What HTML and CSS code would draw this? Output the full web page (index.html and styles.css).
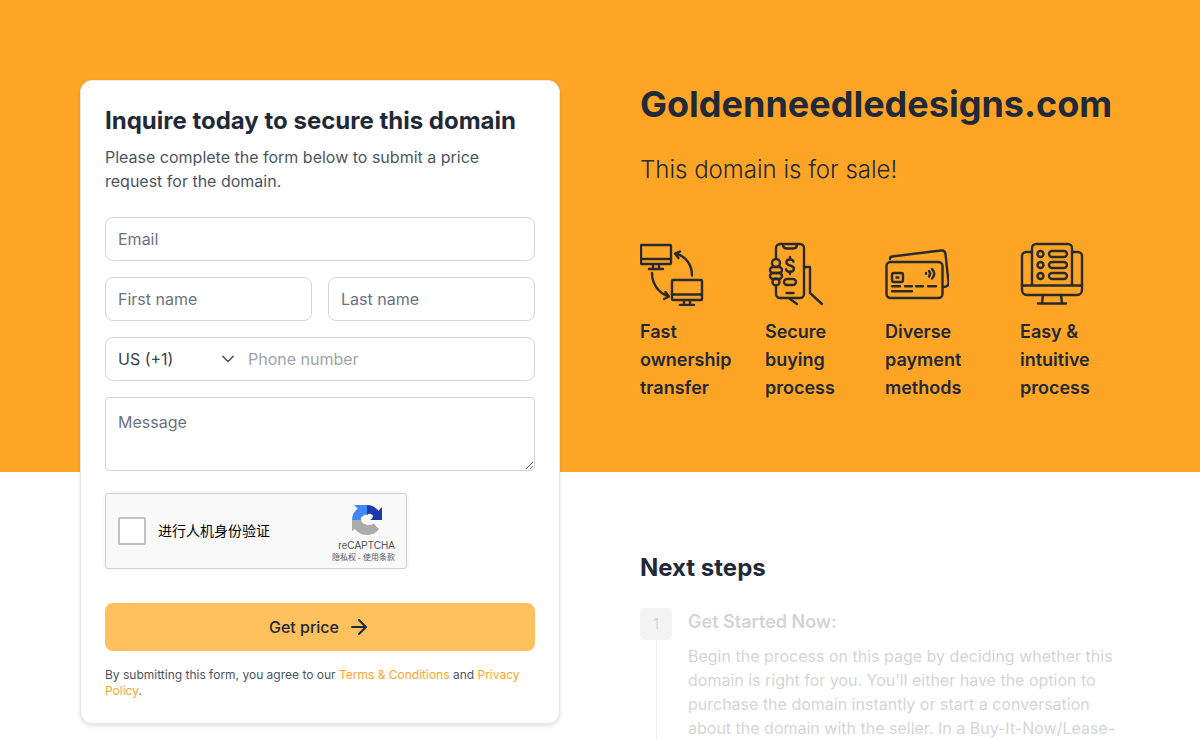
FILE: index.html
```html
<!DOCTYPE html>
<html lang="en">
<head>
    <meta charset="UTF-8">
    <meta name="viewport" content="width=device-width, initial-scale=1.0">
    <title>Goldenneedledesigns.com is for sale</title>
    <link rel="stylesheet" href="styles.css">
</head>
<body>
    <main class="page">
        <div class="hero-bg"></div>

        <form class="card">
            <h2 class="card-title">Inquire today to secure this domain</h2>
            <p class="card-text">Please complete the form below to submit a price request for the domain.</p>

            <div class="fields">
                <input type="email" class="field" placeholder="Email" aria-label="Email">
                <div class="name-row">
                    <input type="text" class="field" placeholder="First name" aria-label="First name">
                    <input type="text" class="field" placeholder="Last name" aria-label="Last name">
                </div>
                <div class="phone-row">
                    <div class="country">
                        <select class="country-select" aria-label="Country code">
                            <option>US (+1)</option>
                        </select>
                        <svg class="chevron" viewBox="0 0 12 8" fill="none" stroke="#4b5563" stroke-width="1.7" stroke-linecap="round" stroke-linejoin="round">
                            <path d="M1 1.500l5 5 5-5"/>
                        </svg>
                    </div>
                    <input type="tel" class="phone-input" placeholder="Phone number" aria-label="Phone number">
                </div>
                <textarea class="field message" placeholder="Message" aria-label="Message"></textarea>
            </div>

            <div class="captcha">
                <input type="checkbox" id="human" class="captcha-box">
                <label for="human" class="captcha-label">进行人机身份验证</label>
                <div class="captcha-brand">
                    <svg class="captcha-logo" viewBox="0 0 64 64">
                        <path fill="#1c3aa9" d="M64 32V4.500L56.400 12.100C50.200 4.500 41.600 0 32 0v22c3-4 8-4 10-1 4 0 4 5 1 7l-4 4z"/>
                        <path fill="#4285f4" d="M32 0H4.500l7.600 7.600C4.500 13.800 0 22.400 0 32h20c-3-4 0-8 4-8 1-3 5-4 8-2z"/>
                        <path fill="#ababab" d="M0 32v24l6-5C13 59.500 22.400 64 32 64c10.500 0 19.800-5 25.600-12.900L45 39c-2 3-5 4-8 3-3 2-7 1-8-2-4 1-8-1-9-8z"/>
                    </svg>
                    <span class="captcha-name">reCAPTCHA</span>
                    <span class="captcha-links"><a href="#">隐私权</a> - <a href="#">使用条款</a></span>
                </div>
            </div>

            <button type="submit" class="submit-btn">
                Get price
                <svg class="arrow" viewBox="0 0 16 16" fill="none" stroke="#1f2937" stroke-width="2" stroke-linecap="round" stroke-linejoin="round">
                    <path d="M1 8h14M8 1l7 7-7 7"/>
                </svg>
            </button>

            <p class="terms">By submitting this form, you agree to our <a href="#">Terms &amp; Conditions</a> and <a href="#">Privacy Policy</a>.</p>
        </form>

        <section class="hero">
            <h1 class="domain">Goldenneedledesigns.com</h1>
            <p class="tagline">This domain is for sale!</p>

            <ul class="features">
                <li>
                    <!-- two computers -->
                    <svg class="feature-icon" viewBox="0 0 64 64">
                        <rect x="1" y="3" width="30" height="19" rx="1"/>
                        <path d="M1 17h30M13 22.500v4M19 22.500v4M9 27h14"/>
                        <rect x="32" y="38" width="30" height="20" rx="1"/>
                        <path d="M32 52.500h30M44 58.500v4M50 58.500v4M40 63h14"/>
                        <path d="M52 33.500C52 23 46 14 35.500 11.500M40 9.500l-5 2 3.500 4.500"/>
                        <path d="M12 31c0 10 6 20 16 23M24 57l5-2.500-3.500-4.500"/>
                    </svg>
                    <span>Fast ownership transfer</span>
                </li>
                <li>
                    <!-- hand with a phone -->
                    <svg class="feature-icon" viewBox="0 0 64 64">
                        <path d="M11 17V6a4 4 0 0 1 4-4h20a4 4 0 0 1 4 4v46a4 4 0 0 1-4 4H15a4 4 0 0 1-4-4v-8"/>
                        <path d="M18 2.500c0 3 1.500 4 4 4h6c2.500 0 4-1 4-4"/>
                        <circle cx="11" cy="21" r="4"/>
                        <rect x="5" y="25" width="12" height="6" rx="3"/>
                        <rect x="5" y="31" width="12" height="6" rx="3"/>
                        <circle cx="11" cy="40" r="3.500"/>
                        <path d="M28.500 19.500c-.5-1.500-2-2-3.500-2-2 0-3.500 1.200-3.500 3s1.500 2.500 3.500 3c2.200.5 4 1.300 4 3.300s-1.800 3-4 3c-1.800 0-3.500-.8-4-2.500M25 15v2.500M25 30v2"/>
                        <rect x="19" y="37" width="12" height="6" rx="3"/>
                        <path d="M21.500 51h7M39.500 26l1-1H45v26l12 11M25 57l7 5"/>
                    </svg>
                    <span>Secure buying process</span>
                </li>
                <li>
                    <!-- bank cards -->
                    <svg class="feature-icon" viewBox="0 0 64 64">
                        <rect x="1.500" y="20" width="56" height="36" rx="4"/>
                        <path d="M5 17v-.5a2 2 0 0 1 2-2L56 8.500c3-.3 4.200 1 4.500 3.500l3 28c.2 3-1 5-5.500 5"/>
                        <rect x="7" y="31" width="11" height="9" rx="2"/>
                        <path d="M11.500 35.500h2M7 44.300h8M20 44.300h7M31 44.300h7M43 44.300h8M7 49.300h20"/>
                        <path d="M41 31v.8M44 29c1.400 1.500 1.400 3.500 0 5.500M47 27c2.800 3 2.800 6.500 0 9.500" />
                    </svg>
                    <span>Diverse payment methods</span>
                </li>
                <li>
                    <!-- form on a monitor -->
                    <svg class="feature-icon" viewBox="0 0 64 64">
                        <path d="M11 10H6a4 4 0 0 0-4 4v34a5 5 0 0 0 5 5h50a5 5 0 0 0 5-5V14a4 4 0 0 0-4-4h-5"/>
                        <path d="M12 43V6a4 4 0 0 1 4-4h32a4 4 0 0 1 4 4v37M2 43.500h60M23 53l-1 8M41 53l1 8M18 61.500h28"/>
                        <circle cx="20.500" cy="12" r="3"/>
                        <circle cx="20.500" cy="23" r="3"/>
                        <circle cx="20.500" cy="34" r="3"/>
                        <rect x="29" y="9" width="18" height="6" rx="3"/>
                        <rect x="29" y="20" width="18" height="6" rx="3"/>
                        <rect x="29" y="31" width="18" height="6" rx="3"/>
                    </svg>
                    <span>Easy &amp; intuitive process</span>
                </li>
            </ul>
        </section>

        <section class="next">
            <h2 class="next-title">Next steps</h2>
            <div class="step">
                <div class="step-marker">
                    <span class="step-number">1</span>
                    <span class="step-line"></span>
                </div>
                <div>
                    <h3 class="step-title">Get Started Now:</h3>
                    <p class="step-text">Begin the process on this page by deciding whether this domain is right for you. You’ll either have the option to purchase the domain instantly or start a conversation about the domain with the seller. In a Buy-It-Now/Lease-</p>
                </div>
            </div>
        </section>
    </main>
</body>
</html>
```
FILE: styles.css
```css
* {
    margin: 0;
    padding: 0;
    box-sizing: border-box;
}

body {
    background: #ffffff;
    color: #1f2937;
    font-family: Inter, sans-serif;
    font-size: 16px;
    line-height: 24px;
}

input,
select,
textarea,
button {
    font: inherit;
    color: inherit;
}

.page {
    display: grid;
    grid-template-columns: 1fr 1fr;
    grid-template-rows: auto 1fr;
}

.hero-bg {
    grid-area: 1 / 1 / 2 / 3;
    background: #ffa526;
}

/* Inquiry form */
.card {
    grid-area: 1 / 1 / 3 / 2;
    align-self: start;
    margin: 80px 40px 16px 80px;
    padding: 24px;
    background: #ffffff;
    border: 1px solid #e5e7eb;
    border-radius: 12px;
    box-shadow: 0 2px 4px rgba(0, 0, 0, 0.12);
}

.card-title {
    font-size: 24px;
    line-height: 32px;
    font-weight: 700;
    margin-bottom: 8px;
}

.card-text {
    color: #4b5563;
    margin-bottom: 24px;
}

.fields {
    display: grid;
    gap: 16px;
}

.field {
    width: 100%;
    height: 44px;
    padding: 0 12px;
    border: 1px solid #d1d5db;
    border-radius: 8px;
    background: #ffffff;
}

.field::placeholder {
    color: #6b7280;
}

.name-row {
    display: grid;
    grid-template-columns: 1fr 1fr;
    gap: 16px;
}

.phone-row {
    display: flex;
    height: 44px;
    border: 1px solid #d1d5db;
    border-radius: 8px;
}

.country {
    display: flex;
    align-items: center;
    width: 128px;
    padding-left: 12px;
}

.country-select {
    flex: 1;
    min-width: 0;
    height: 100%;
    border: none;
    background: transparent;
    color: #374151;
    appearance: none;
}

.chevron {
    width: 12px;
    height: 8px;
}

.phone-input {
    flex: 1;
    min-width: 0;
    padding: 0 14px;
    border: none;
    background: transparent;
}

.phone-input::placeholder {
    color: #9ca3af;
}

.message {
    display: block;
    height: 74px;
    padding: 12px;
    border-radius: 4px;
    resize: vertical;
}

/* Captcha */
.captcha {
    display: flex;
    align-items: center;
    width: 302px;
    height: 76px;
    margin: 22px 0 34px;
    padding: 0 11px 0 12px;
    background: #f9f9f9;
    border: 1px solid #d3d3d3;
    border-radius: 3px;
    box-shadow: 0 0 4px rgba(0, 0, 0, 0.08);
    color: #000000;
    font-family: "Liberation Sans", "Noto Sans CJK SC", sans-serif;
}

.captcha-box {
    appearance: none;
    width: 28px;
    height: 28px;
    border: 2px solid #c1c1c1;
    border-radius: 2px;
    background: #ffffff;
}

.captcha-label {
    flex: 1;
    margin-left: 12px;
    font-size: 14px;
}

.captcha-brand {
    display: flex;
    flex-direction: column;
    align-items: flex-end;
    padding-top: 6px;
    color: #555555;
}

.captcha-logo {
    width: 30px;
    height: 30px;
    margin: 0 13px 4px 0;
}

.captcha-name {
    font-size: 10px;
    line-height: 13px;
}

.captcha-links {
    font-size: 8px;
    line-height: 12px;
}

.captcha-links a {
    color: inherit;
    text-decoration: none;
}

.submit-btn {
    display: flex;
    align-items: center;
    justify-content: center;
    gap: 12px;
    width: 100%;
    height: 48px;
    padding-right: 4px;
    border: none;
    border-radius: 8px;
    background: #ffc15e;
    font-weight: 500;
    cursor: pointer;
}

.arrow {
    width: 16px;
    height: 16px;
}

.terms {
    margin-top: 16px;
    color: #4b5563;
    font-size: 12px;
    line-height: 16px;
}

.terms a {
    color: #ffa526;
    text-decoration: none;
}

/* Domain and selling points */
.hero {
    grid-area: 1 / 2 / 2 / 3;
    padding: 80px 80px 70px 40px;
}

.domain {
    font-size: 36px;
    line-height: 48px;
    font-weight: 700;
    margin-bottom: 24px;
}

.tagline {
    font-size: 24px;
    line-height: 36px;
    font-weight: 300;
    margin-bottom: 54px;
}

.features {
    display: grid;
    grid-template-columns: 125fr 120fr 135fr 100fr;
    list-style: none;
    font-size: 18px;
    line-height: 28px;
    font-weight: 600;
}

.features li {
    display: flex;
    flex-direction: column;
    gap: 12px;
    padding-right: 20px;
}

.feature-icon {
    width: 64px;
    height: 64px;
    fill: none;
    stroke: #292a2b;
    stroke-width: 2.4;
    stroke-linecap: round;
    stroke-linejoin: round;
}

/* Next steps */
.next {
    grid-area: 2 / 2 / 3 / 3;
    padding: 80px 80px 0 40px;
}

.next-title {
    font-size: 24px;
    line-height: 32px;
    font-weight: 700;
    margin-bottom: 24px;
}

.step {
    display: flex;
    gap: 16px;
    color: #292a2b;
    opacity: 0.2;
}

.step-marker {
    display: flex;
    flex-direction: column;
    align-items: center;
}

.step-number {
    width: 32px;
    height: 32px;
    border-radius: 6px;
    background: #c8c8c8;
    font-size: 14px;
    line-height: 32px;
    text-align: center;
}

.step-line {
    flex: 1;
    width: 1px;
    background: #9ca3af;
}

.step-title {
    font-size: 18px;
    line-height: 28px;
    font-weight: 600;
    margin-bottom: 8px;
}

@media (max-width: 900px) {
    .page {
        display: block;
        background: #ffa526;
    }

    .card {
        margin: 24px;
    }

    .hero {
        padding: 24px;
    }

    .next {
        padding: 24px;
        background: #ffffff;
    }
}
```
